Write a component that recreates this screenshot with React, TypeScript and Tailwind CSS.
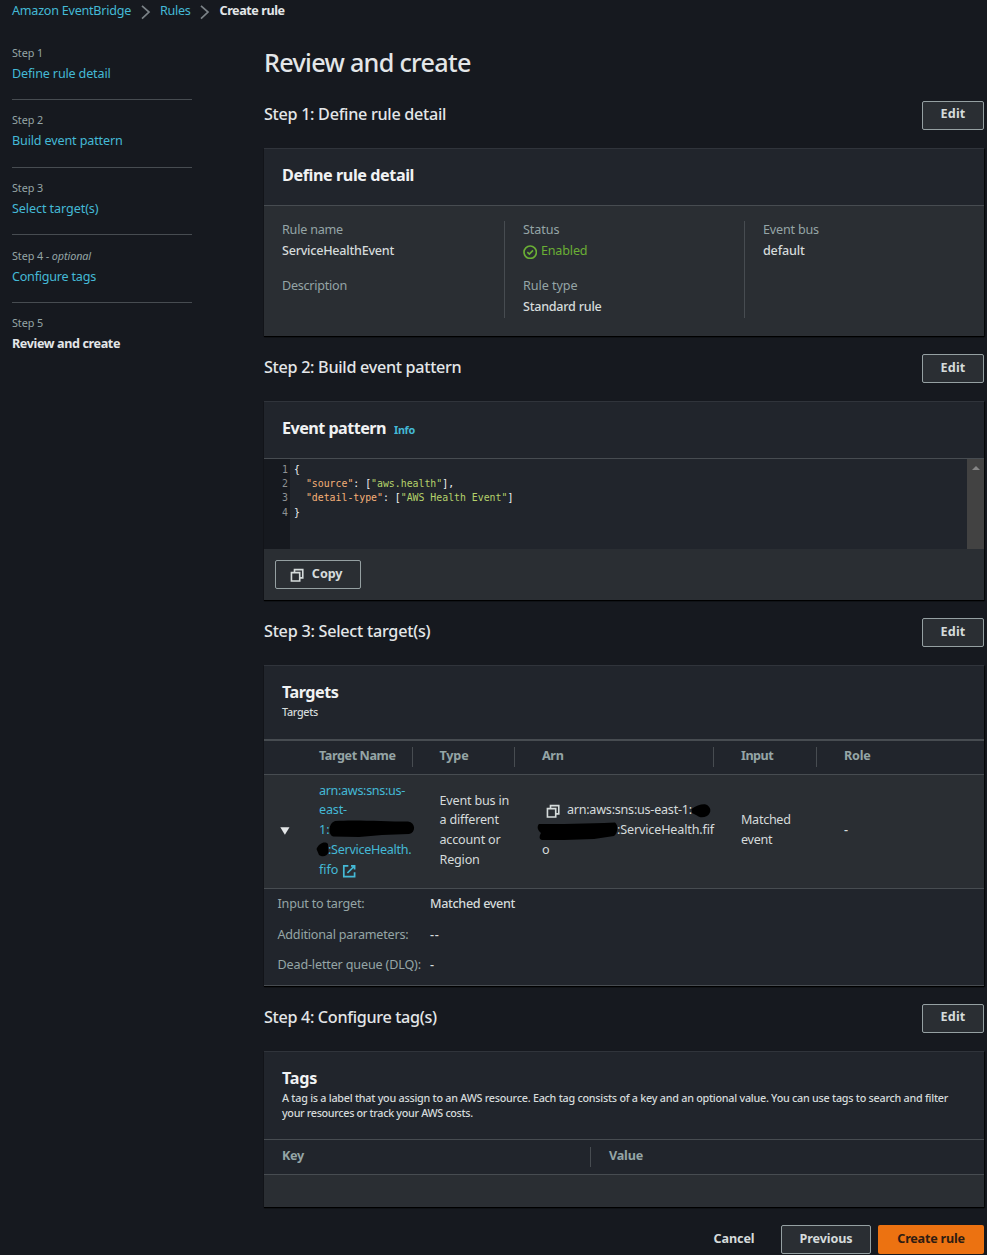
import React from 'react';

const LINK = 'text-[#44b9d6]';
const LABEL = 'text-[#95a5a6]';

function Chevron() {
  return (
    <svg width="10" height="16" viewBox="0 0 10 16" className="mt-[1px] block" fill="none" stroke="#7b8287" strokeWidth="1.7">
      <path d="M1 1.8l7 6.2L1 14.6" />
    </svg>
  );
}

function CopyIcon({ className = '' }: { className?: string }) {
  return (
    <svg width="14.4" height="14.4" viewBox="0 0 16 16" className={className} fill="none" stroke="#d5dbdb" strokeWidth="1.8">
      <path d="M1.6 5.2h9.2v9.2H1.6z" />
      <path d="M5 5V1.8h9.2v9.2h-3.4" />
    </svg>
  );
}

function ExternalIcon() {
  return (
    <svg width="14.4" height="14.4" viewBox="0 0 16 16" className="ml-[4px] inline-block align-[-4.5px]" fill="none" stroke="#44b9d6" strokeWidth="1.9">
      <path d="M10 2h4v4M6 10l8-8M14 9.05V14H2V2h5.04" />
    </svg>
  );
}

function StatusIcon() {
  return (
    <svg width="14.4" height="14.4" viewBox="0 0 16 16" className="mt-[2px] mr-[3.5px] block" fill="none" stroke="#6aaf35" strokeWidth="1.8">
      <circle cx="8" cy="8" r="6.9" />
      <path d="M4.8 8l2.3 2.2 4-4.2" />
    </svg>
  );
}

function Button({ className, children }: { className: string; children: React.ReactNode }) {
  return (
    <button
      className={`flex h-[29px] shrink-0 items-center justify-center rounded-[2px] border border-[#95a0a2] bg-[#2a2e33] font-bold text-[#d5dbdb] ${className}`}
    >
      {children}
    </button>
  );
}

function Section({ title, tracking, edit, children }: { title: string; tracking: string; edit: string; children: React.ReactNode }) {
  return (
    <section className="mb-[18px]">
      <div className="mb-[18px] flex items-start justify-between">
        <h2 className={`h-[28px] text-[16.2px] leading-[26px] font-medium text-[#e3e6e8] ${tracking}`}>{title}</h2>
        <Button className={`w-[62px] tracking-[0.15px] ${edit}`}>Edit</Button>
      </div>
      <div className="border-t border-[#30343b] bg-[#21252c] shadow-[0_1px_1px_0_#000,1px_1px_1px_0_rgba(0,0,0,0.6)]">{children}</div>
    </section>
  );
}

function Step({ label, note, name, last, tracking }: { label: string; note?: string; name: string; last?: boolean; tracking: string }) {
  return (
    <li className={`h-[67.6px] pt-[10.45px] ${last ? '' : 'border-b border-[#474c51]'}`}>
      <div className={`h-[20px] text-[10.8px] leading-[20px] tracking-[-0.09px] ${LABEL}`}>
        {label}
        {note && (
          <>
            {' - '}
            <i>{note}</i>
          </>
        )}
      </div>
      <div className={`h-[20px] leading-[21px] ${tracking} ${last ? 'font-bold text-[#e3e6e8]' : LINK}`}>{name}</div>
    </li>
  );
}

function Th({ className, rule, children }: { className: string; rule?: boolean; children?: React.ReactNode }) {
  return (
    <div className={`flex items-center ${className}`}>
      <span className={`flex-1 pb-[3px] font-bold whitespace-nowrap ${LABEL}`}>{children}</span>
      {rule && <span className="mb-[1px] h-[20px] w-px bg-[#474c51]" />}
    </div>
  );
}

function Param({ label, tracking, value }: { label: string; tracking: string; value: React.ReactNode }) {
  return (
    <div className="flex h-[30.5px] pl-[13.5px] leading-[30px]">
      <span className={`w-[152.5px] whitespace-nowrap ${tracking} ${LABEL}`}>{label}</span>
      <span className="font-medium tracking-[-0.35px]">{value}</span>
    </div>
  );
}

const K = ({ children }: { children: string }) => <span className="text-[#f5b078]">{children}</span>;
const V = ({ children }: { children: string }) => <span className="text-[#b5d26b]">{children}</span>;

export default function App() {
  return (
    <div className='h-[1255px] w-[987px] overflow-hidden bg-[#16191f] font-["Noto_Sans","Open_Sans",sans-serif] text-[12.6px] leading-[20px] text-[#d5dbdb]'>
      <nav className="flex h-[32px] items-start pt-[1px] pl-[12px] leading-[20px]">
        <span className={`w-[128.5px] tracking-[-0.25px] ${LINK}`}>Amazon EventBridge</span>
        <span className="pt-[2px]"><Chevron /></span>
        <span className={`ml-[9.5px] w-[40px] tracking-[-0.3px] ${LINK}`}>Rules</span>
        <span className="pt-[2px]"><Chevron /></span>
        <span className="ml-[9.5px] font-bold tracking-[-0.44px] text-[#e3e6e8]">Create rule</span>
      </nav>

      <div className="flex">
        <aside className="w-[264px] pt-[0.4px] pl-[12px]">
          <ol className="w-[180px]">
            <Step label="Step 1" name="Define rule detail" tracking="tracking-[-0.17px]" />
            <Step label="Step 2" name="Build event pattern" tracking="tracking-[-0.15px]" />
            <Step label="Step 3" name="Select target(s)" tracking="tracking-[-0.09px]" />
            <Step label="Step 4" note="optional" name="Configure tags" tracking="tracking-[-0.23px]" />
            <Step label="Step 5" name="Review and create" last tracking="tracking-[-0.39px]" />
          </ol>
        </aside>

        <main className="w-[720px]">
          <h1 className="h-[69px] pt-[14px] text-[25.2px] leading-[32px] font-medium tracking-[-0.7px] text-[#e3e6e8]">Review and create</h1>

          <Section title="Step 1: Define rule detail" tracking="tracking-[-0.3px]" edit="pb-[4px]">
            <h3 className="h-[56px] pt-[15px] pl-[18px] text-[16.2px] leading-[22px] font-bold tracking-[-0.43px] text-[#f0f2f3]">
              Define rule detail
            </h3>
            <div className="grid h-[131px] grid-cols-3 border-t border-[#474c51] bg-[#2a2e33] pt-[15px]">
              <div className="h-[97px] pl-[18px]">
                <div className={`leading-[17px] tracking-[-0.22px] ${LABEL}`}>Rule name</div>
                <div className="leading-[26px] font-medium tracking-[-0.25px]">ServiceHealthEvent</div>
                <div className={`pt-[11px] leading-[22px] tracking-[-0.25px] ${LABEL}`}>Description</div>
              </div>
              <div className="h-[97px] border-l border-[#474c51] pl-[18px]">
                <div className={`leading-[17px] tracking-[-0.07px] ${LABEL}`}>Status</div>
                <div className="flex h-[26px] items-center leading-[26px] tracking-[-0.17px] text-[#6aaf35]">
                  <StatusIcon />
                  Enabled
                </div>
                <div className={`pt-[11px] leading-[22px] tracking-[-0.06px] ${LABEL}`}>Rule type</div>
                <div className="leading-[20px] font-medium tracking-[-0.26px]">Standard rule</div>
              </div>
              <div className="h-[97px] border-l border-[#474c51] pl-[18px]">
                <div className={`leading-[17px] tracking-[-0.19px] ${LABEL}`}>Event bus</div>
                <div className="leading-[26px] font-medium tracking-[-0.19px]">default</div>
              </div>
            </div>
          </Section>

          <Section title="Step 2: Build event pattern" tracking="tracking-[-0.3px]" edit="pb-[2px]">
            <div className="flex h-[56px] items-baseline pt-[15px] pl-[18px]">
              <h3 className="text-[16.2px] leading-[22px] font-bold tracking-[-0.55px] text-[#f0f2f3]">Event pattern</h3>
              <span className={`ml-[8px] text-[10.8px] font-bold tracking-[-0.29px] ${LINK}`}>Info</span>
            </div>
            <div className='flex h-[91px] border-t border-[#474c51] font-["DejaVu_Sans_Mono",monospace] text-[9.85px] leading-[14.4px] text-[#f0f2f3]'>
              <div className="w-[26px] bg-[#16191f] pt-[3.5px] pr-[2px] text-right text-[#8d9194]">
                <div>1</div>
                <div>2</div>
                <div>3</div>
                <div>4</div>
              </div>
              <div className="flex-1 pt-[3.5px] pl-[4px] whitespace-pre">
                <div>{'{'}</div>
                <div className="pl-[11.9px]">
                  <K>"source"</K>
                  <span>{': ['}</span>
                  <V>"aws.health"</V>
                  <span>{'],'}</span>
                </div>
                <div className="pl-[11.9px]">
                  <K>"detail-type"</K>
                  <span>{': ['}</span>
                  <V>"AWS Health Event"</V>
                  <span>{']'}</span>
                </div>
                <div>{'}'}</div>
              </div>
              <div className="flex w-[17px] justify-center bg-[#424242] pt-[7px]">
                <svg width="8" height="4" viewBox="0 0 8 4" className="block" fill="#868686">
                  <path d="M4 0l4 4H0z" />
                </svg>
              </div>
            </div>
            <div className="h-[51px] bg-[#2a2e33] pt-[11px] pl-[11px]">
              <Button className="w-[86px] pr-[3px] tracking-[-0.05px]">
                <CopyIcon className="mt-[1px] mr-[7px]" />
                <span className="pb-[2px]">Copy</span>
              </Button>
            </div>
          </Section>

          <Section title="Step 3: Select target(s)" tracking="tracking-[-0.25px]" edit="pb-[2px]">
            <div className="h-[73px] pt-[15px] pl-[18px]">
              <h3 className="text-[16.2px] leading-[22px] font-bold tracking-[-0.48px] text-[#f0f2f3]">Targets</h3>
              <div className="pt-[1px] text-[10.8px] leading-[15px] font-medium tracking-[-0.3px]">Targets</div>
            </div>
            <div className="flex h-[36px] border-t-2 border-b border-[#474c51] tracking-[-0.35px]">
              <Th rule className="w-[149px] pl-[55px] tracking-[-0.42px]">Target Name</Th>
              <Th rule className="w-[102px] pl-[26.5px] tracking-[-0.17px]">Type</Th>
              <Th rule className="w-[199px] pl-[27px]">Arn</Th>
              <Th rule className="w-[103px] pl-[27px] tracking-[-0.5px]">Input</Th>
              <Th className="flex-1 pl-[27px] tracking-[-0.23px]">Role</Th>
            </div>
            <div className="relative flex h-[114px] items-center border-b border-[#474c51] bg-[#2a2e33] pb-[3px] leading-[19.7px]">
              <div className="w-[55px] pt-[2px] pl-[16px]">
                <svg width="10" height="8" viewBox="0 0 10 8" className="block" fill="#e3e6e8">
                  <path d="M0.3 0.3h9.2L4.9 7.7z" />
                </svg>
              </div>
              <div className={`w-[120.5px] whitespace-nowrap ${LINK}`}>
                <div className="h-[19.7px] tracking-[-0.33px]">arn:aws:sns:us-</div>
                <div className="h-[19.7px] tracking-[-0.16px]">east-</div>
                <div className="h-[19.7px]">1:</div>
                <div className="h-[19.7px] pl-[9px] tracking-[-0.3px]">:ServiceHealth.</div>
                <div className="h-[19.7px] tracking-[-0.05px]">
                  fifo
                  <ExternalIcon />
                </div>
              </div>
              <div className="w-[102.5px] whitespace-nowrap tracking-[-0.2px]">
                <div>Event bus in</div>
                <div>a different</div>
                <div>account or</div>
                <div>Region</div>
              </div>
              <div className="w-[199px] whitespace-nowrap">
                <div className="flex items-center pl-[4px] tracking-[-0.24px]">
                  <CopyIcon className="mt-[2px] mr-[6.5px]" />
                  arn:aws:sns:us-east-1:
                </div>
                <div className="pl-[75px] tracking-[-0.15px]">:ServiceHealth.fif</div>
                <div>o</div>
              </div>
              <div className="w-[103px] tracking-[-0.3px]">
                <div>Matched</div>
                <div>event</div>
              </div>
              <div className="font-medium">-</div>
              <svg width="720" height="113" viewBox="0 0 720 113" className="absolute top-0 left-0" fill="#000">
                <path d="M71 46C90 44.5 120 46.4 144 46.5C152 47.5 152 58 145 59L118 60L95 62L69 61.5C64 60 64 48 71 46Z" />
                <path d="M52.5 74C55 68 61 66 64 69L64.5 77C63 82 58 82 55 80Z" />
                <path d="M427.5 34C432 30.5 437 29 441 29.3C447.5 31 448 38 443 41C439 43 435 42.5 433 40.5L428 38Z" />
                <path d="M275 49L300 49L340 48L351 47.5C354.5 50 354 58 350 61L330 64L300 65L278 65C274 64 276 60 277 58C273 55 273 51 275 49Z" />
              </svg>
            </div>
            <div className="h-[97px] border-b border-[#474c51]">
              <Param label="Input to target:" tracking="tracking-[-0.21px]" value="Matched event" />
              <Param label="Additional parameters:" tracking="tracking-[-0.21px]" value={<span className="tracking-[0.6px]">--</span>} />
              <Param label="Dead-letter queue (DLQ):" tracking="tracking-[-0.16px]" value="-" />
            </div>
          </Section>

          <Section title="Step 4: Configure tag(s)" tracking="tracking-[-0.33px]" edit="pb-[4px]">
            <div className="h-[87px] pt-[15px] pl-[18px]">
              <h3 className="text-[16.2px] leading-[22px] font-bold tracking-[-0.28px] text-[#f0f2f3]">Tags</h3>
              <p className="w-[690px] pt-[1px] text-[10.8px] leading-[15px] font-medium">
                <span className="tracking-[-0.26px] whitespace-nowrap">
                  A tag is a label that you assign to an AWS resource. Each tag consists of a key and an optional value. You can use tags to search and filter
                </span>{' '}
                <span className="tracking-[-0.33px] whitespace-nowrap">your resources or track your AWS costs.</span>
              </p>
            </div>
            <div className="flex h-[36px] border-t border-b border-[#474c51]">
              <Th rule className="w-[327px] pl-[18px] tracking-[-0.28px]">Key</Th>
              <Th className="flex-1 pl-[18px] tracking-[-0.19px]">Value</Th>
            </div>
            <div className="h-[32px] bg-[#2a2e33]" />
          </Section>

          <footer className="flex items-start justify-end">
            <span className="mr-[26.5px] pt-[4px] font-bold tracking-[-0.1px]">Cancel</span>
            <Button className="mr-[7px] w-[90px] pb-[2px] tracking-[-0.1px]">Previous</Button>
            <button className="flex h-[29px] w-[106px] items-center justify-center rounded-[2px] bg-[#ec7211] pb-[2px] font-bold tracking-[-0.22px] text-[#2f1c12]">
              Create rule
            </button>
          </footer>
        </main>
      </div>
    </div>
  );
}
